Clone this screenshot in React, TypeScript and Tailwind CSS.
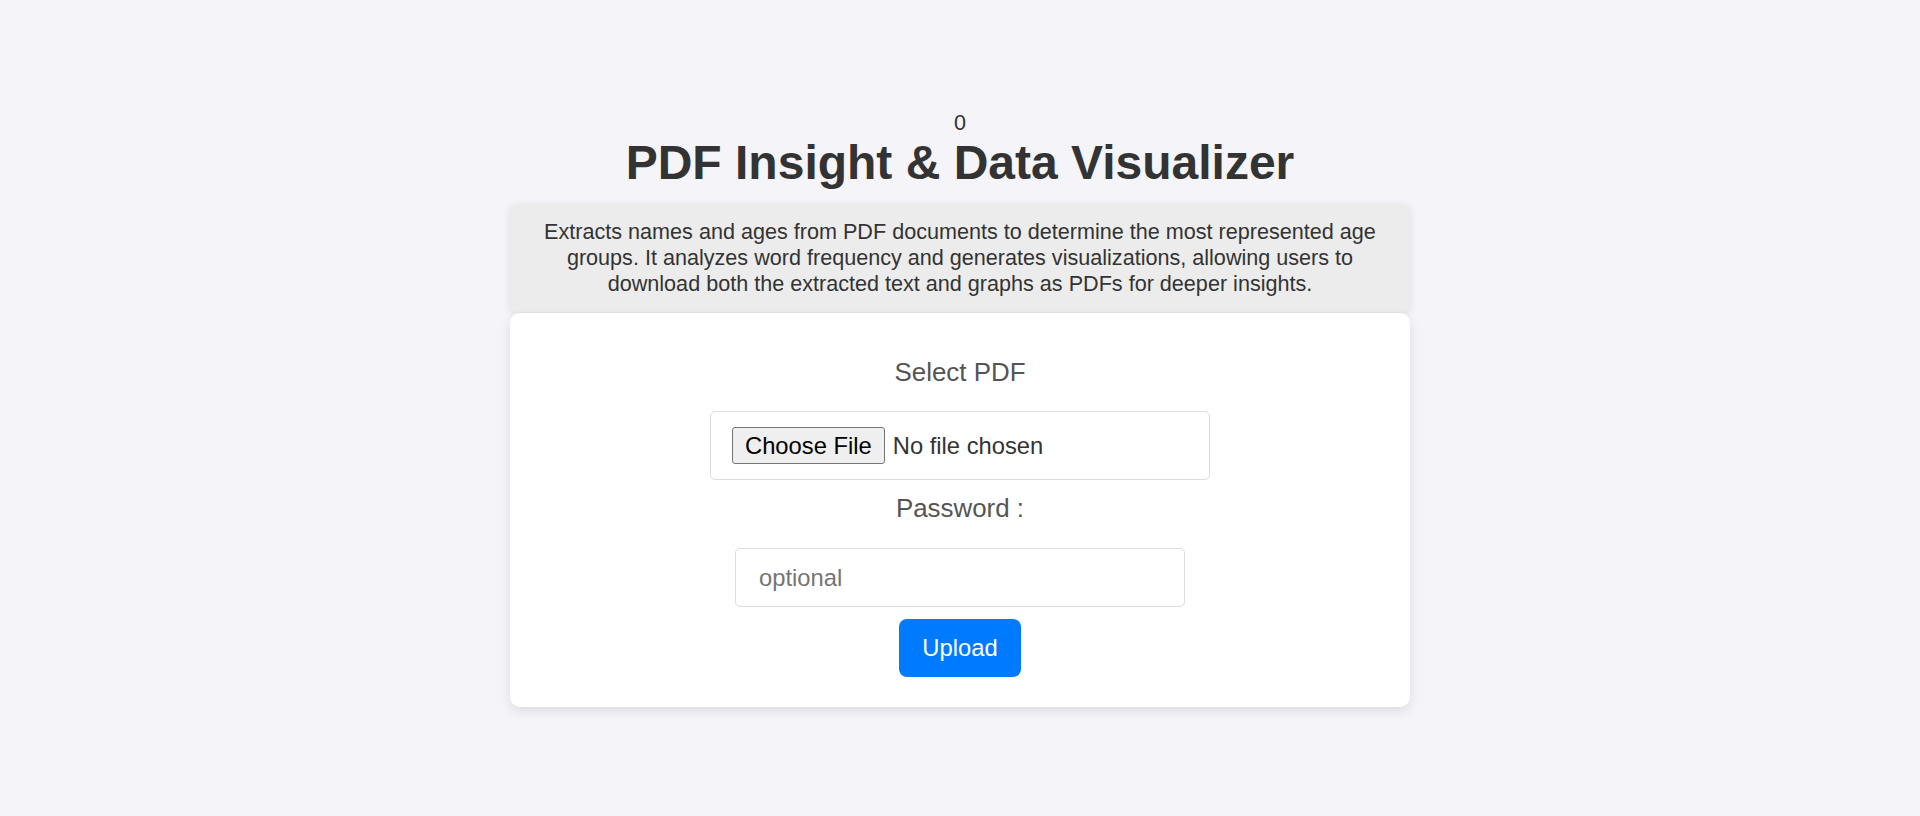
import { useState } from 'react';

export default function App() {
  const [count] = useState(0);
  const [password, setPassword] = useState('');

  return (
    <div className="min-h-screen bg-[#f4f4f9] font-['Liberation_Sans',Arial,sans-serif] text-[#333]">
      <div className="mx-auto flex w-[900px] flex-col pt-[110px]">
        <div className="text-center text-[21.6px] leading-[25px]">{count}</div>
        <h1 className="text-center text-[48px] font-bold leading-[55px]">PDF Insight &amp; Data Visualizer</h1>

        <div className="mt-[14px] rounded-[8px] bg-[#ececec] px-[20px] py-[15px] text-center text-[21.6px] leading-[26px] shadow-[0_2px_8px_rgba(0,0,0,0.1)]">
          Extracts names and ages from PDF documents to determine the most represented age groups. It analyzes word
          frequency and generates visualizations, allowing users to download both the extracted text and graphs as
          PDFs for deeper insights.
        </div>

        <form
          onSubmit={e => e.preventDefault()}
          className="mt-px flex flex-col items-center rounded-[10px] bg-white pt-[44px] pb-[30px] shadow-[0_4px_12px_rgba(0,0,0,0.1)]"
        >
          <label className="text-[25.9px] leading-[30px] text-[#555]">Select PDF</label>
          <input
            type="file"
            accept="application/pdf"
            className="mt-[24px] w-[500px] rounded-[5px] border border-[#ddd] px-[21px] pt-[15px] pb-[15px] text-[23.76px] leading-[27px] text-[#333] file:mr-[8px] file:rounded-[3px] file:border file:border-solid file:border-[#767676] file:bg-[#efefef] file:px-[12px] file:py-[4px] file:text-black"
          />
          <label className="mt-[13px] text-[25.9px] leading-[30px] text-[#555]">Password :</label>
          <input
            type="password"
            value={password}
            onChange={e => setPassword(e.target.value)}
            placeholder="optional"
            className="mt-[25px] w-[450px] rounded-[5px] border border-[#ddd] px-[23px] py-[15px] text-[23.76px] leading-[27px] outline-none placeholder:text-[#757575]"
          />
          <button
            type="submit"
            className="mt-[12px] rounded-[8px] bg-[#007bff] px-[23px] py-[15px] text-[23.76px] leading-[28px] text-white"
          >
            Upload
          </button>
        </form>
      </div>
    </div>
  );
}
